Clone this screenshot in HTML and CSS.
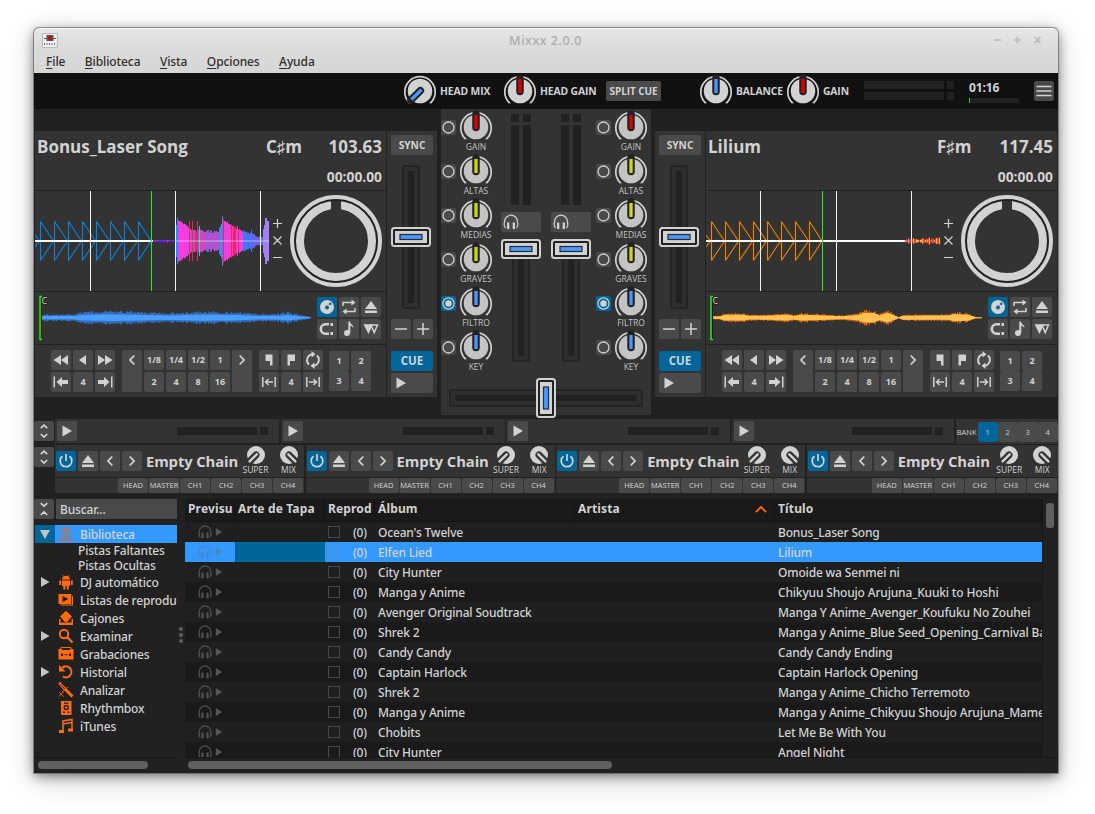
FILE: index.html
```html
<!DOCTYPE html>
<html lang="es">
<head>
<meta charset="utf-8">
<title>Mixxx 2.0.0</title>
<link rel="stylesheet" href="styles.css">
</head>
<body>
<svg class="defs" aria-hidden="true">
  <symbol id="eject" viewBox="0 0 20 20"><path d="M10 4l6 8H4zM4 13.500h12V16H4z"/></symbol>
  <symbol id="vinyl" viewBox="0 0 20 20"><circle cx="10" cy="10" r="7"/><circle cx="10" cy="10.500" r="1.900" fill="#069"/><path d="M11.500 8.500l1.300-1.300" stroke="#069" stroke-width=".8"/><circle cx="13.300" cy="6.700" r="1.200" fill="#069"/></symbol>
  <symbol id="repeat" viewBox="0 0 20 20"><path d="M4 9V5.500h10M16 11v3.500H6" fill="none" stroke="currentColor" stroke-width="1.500"/><path d="M12.500 2.500l4 3-4 3zM7.500 11.500l-4 3 4 3z"/></symbol>
  <symbol id="magnet" viewBox="0 0 20 20"><path d="M12 5.300H8.500a4.700 4.700 0 0 0 0 9.400H12" fill="none" stroke="currentColor" stroke-width="2.600"/><path d="M13.500 4H16v3h-2.500zM13.500 13H16v3h-2.500z"/></symbol>
  <symbol id="note" viewBox="0 0 20 20"><circle cx="8" cy="14" r="3"/><path d="M9.300 14V2.500h1.700c.2 3 4 3 3.300 7-.6-2-1.600-2.500-3-2.700V14z"/></symbol>
  <symbol id="slip" viewBox="0 0 20 20"><path d="M10 6h6.500l-3.300 7.500z" fill="none" stroke="currentColor" stroke-width="1.500"/><path d="M2.500 5.200H12L7.500 15z"/></symbol>
  <symbol id="rew" viewBox="0 0 20 20"><path d="M2.500 10L10 5v10zM10 10l7-5v10z"/></symbol>
  <symbol id="back" viewBox="0 0 20 20"><path d="M6 10l7-5v10z"/></symbol>
  <symbol id="ffw" viewBox="0 0 20 20"><path d="M17.500 10L10 5v10zM10 10L3 5v10z"/></symbol>
  <symbol id="jumpb" viewBox="0 0 20 20"><path d="M2.500 4.500h1.500v11H2.500zM5.500 10L11 5v3h6v4h-6v3z"/></symbol>
  <symbol id="jumpf" viewBox="0 0 20 20"><path d="M17.500 4.500H16v11h1.500zM14.500 10L9 5v3H3v4h6v3z"/></symbol>
  <symbol id="left" viewBox="0 0 20 20"><path d="M12.300 5.500L8 10l4.300 4.500" fill="none" stroke="currentColor" stroke-width="1.800"/></symbol>
  <symbol id="right" viewBox="0 0 20 20"><path d="M7.700 5.500L12 10l-4.300 4.500" fill="none" stroke="currentColor" stroke-width="1.800"/></symbol>
  <symbol id="loopin" viewBox="0 0 20 20"><path d="M6.500 4.500h7v11h-2.500v-4.500h-4.500z"/></symbol>
  <symbol id="loopout" viewBox="0 0 20 20"><path d="M6.500 4.500h7.500v6.500H9v4.500H6.500z"/></symbol>
  <symbol id="reloop" viewBox="0 0 20 20"><path d="M6 14.500A6 6 0 0 1 9.500 4.200M14 5.500a6 6 0 0 1-3.500 10.300" fill="none" stroke="currentColor" stroke-width="1.900"/><path d="M8.500 1l4 3.300-4 3.200zM11.500 12.500l-4 3.300 4 3.200z"/></symbol>
  <symbol id="halve" viewBox="0 0 20 20"><path d="M3.800 5v10M16.200 5v10M6.500 10h7.500M9.500 7l-3 3 3 3" fill="none" stroke="currentColor" stroke-width="1.500"/></symbol>
  <symbol id="double" viewBox="0 0 20 20"><path d="M3.800 5v10M16.200 5v10M6 10h7.500M10.500 7l3 3-3 3" fill="none" stroke="currentColor" stroke-width="1.500"/></symbol>
  <symbol id="minus" viewBox="0 0 20 20"><path d="M4 10h12" stroke="currentColor" stroke-width="1.500"/></symbol>
  <symbol id="plus" viewBox="0 0 20 20"><path d="M4 10h12M10 4v12" stroke="currentColor" stroke-width="1.500"/></symbol>
  <symbol id="play" viewBox="0 0 20 20"><path d="M5.500 4.500l9.500 5.500-9.500 5.500z"/></symbol>
  <symbol id="power" viewBox="0 0 20 20"><path d="M6.500 5.300a5.800 5.800 0 1 0 7 0M10 3v7" fill="none" stroke="currentColor" stroke-width="1.700"/></symbol>
  <symbol id="expand" viewBox="0 0 20 20"><path d="M6.800 7.200L10 4.200l3.200 3M6.800 13l3.200 3 3.200-3" fill="none" stroke="currentColor" stroke-width="1.700"/></symbol>
  <symbol id="collapse" viewBox="0 0 20 20"><path d="M6.800 4.200L10 7.200l3.200-3M6.800 16l3.200-3 3.200 3" fill="none" stroke="currentColor" stroke-width="1.700"/></symbol>
  <symbol id="menu" viewBox="0 0 20 20"><path d="M3 5.500h14M3 10h14M3 14.500h14" stroke="currentColor" stroke-width="1.400" stroke-linecap="round"/></symbol>
  <symbol id="phones" viewBox="0 0 20 20"><path d="M4.500 16A6.500 6.500 0 0 1 3.700 9.500a6.300 6.300 0 0 1 12.600 0A6.500 6.500 0 0 1 15.500 16" fill="none" stroke="currentColor" stroke-width="1.200"/><path d="M6 10.500h2.300v6.500H6zM11.700 10.500H14v6.500h-2.300z"/></symbol>
  <symbol id="ring" viewBox="0 0 15 15"><circle cx="7.500" cy="7.500" r="5.500" fill="none" stroke="currentColor" stroke-width="1.300"/></symbol>
  <symbol id="ringon" viewBox="0 0 15 15"><circle cx="7.500" cy="7.500" r="5.600" fill="none" stroke="currentColor" stroke-width="1.200"/><circle cx="7.500" cy="7.500" r="3.200"/></symbol>
  <symbol id="library" viewBox="0 0 16 16"><path d="M8 1l6.500 3.500h-13zM3 6h1.500v6.500H3zM6 6h1.300v6.500H6zM8.700 6H10v6.500H8.700zM11.500 6H13v6.500h-1.500zM1 13.500h14V15H1z"/></symbol>
  <symbol id="robot" viewBox="0 0 16 16"><path d="M4 5.500a4 3.800 0 0 1 8 0zM4 6.500h8V12H4zM1.200 6.500h2V11h-2zM12.800 6.500h2V11h-2zM5.300 12h2v3.500h-2zM8.700 12h2v3.500h-2z"/><path d="M4.500.8l1.800 2M11.500.8l-1.800 2" stroke="currentColor" stroke-width=".7"/></symbol>
  <symbol id="lists" viewBox="0 0 16 16"><path d="M.5 2h12.800v10H.5zM14 4h1v9.500H2.500v-1H14z"/><path d="M4.500 4l6 3-6 3z" fill="#212121"/></symbol>
  <symbol id="crates" viewBox="0 0 16 16"><path d="M8 .8l6 5.700-5 5.500H7L2 6.500zM1 9h1.500v3.500h11V9H15v6H1z"/></symbol>
  <symbol id="search" viewBox="0 0 16 16"><circle cx="6" cy="6" r="4.200" fill="none" stroke="currentColor" stroke-width="2"/><path d="M9 9l5.500 5.500" stroke="currentColor" stroke-width="2.300"/></symbol>
  <symbol id="tape" viewBox="0 0 16 16"><path d="M.5 3h15v10.500H.5z"/><path d="M3 3V1.500h10V3" fill="none" stroke="currentColor"/><path d="M4 2.500h8V4H4zM3 7.500h2V10H3zM11 7.500h2V10h-2zM6.500 8.200h3v1h-3z" fill="#212121"/></symbol>
  <symbol id="history" viewBox="0 0 16 16"><path d="M4 4A5.500 5.500 0 1 1 5 12.500" fill="none" stroke="currentColor" stroke-width="2.100"/><path d="M1 1v6.500h6.500z"/></symbol>
  <symbol id="wand" viewBox="0 0 16 16"><path d="M1 1l2 1M3 3l11.500 11.500" stroke="currentColor" stroke-width="3"/><path d="M3.500 3.500l3.300 3.300" stroke="#212121"/><path d="M1 10l4.500 4.500M5.500 10L1 14.500M4 10l6-5" stroke="currentColor" stroke-width=".9"/></symbol>
  <symbol id="player" viewBox="0 0 16 16"><path d="M3 1h10.500v14H3z"/><path d="M6 2.500h4.500v1.300H6zM5 11.500h2V13H5zM9.500 11.500h2V13h-2z" fill="#212121"/><circle cx="8.300" cy="7.500" r="2.700" fill="#212121"/><circle cx="8.300" cy="7.500" r="1.300"/></symbol>
  <symbol id="tunes" viewBox="0 0 16 16"><path d="M5 13V3l9-1.500v10M5 6l9-1.500" fill="none" stroke="currentColor" stroke-width="1.500"/><path d="M1 12h5v3H1zM10 10.500h5v3h-5z"/></symbol>
</svg>
<div class="window">
  <header class="titlebar">
    <svg class="appicon" viewBox="0 0 16 16"><path d="M.5.5h15v14H.5z" fill="#eee" stroke="#bbb"/><path d="M2 5.500h12" stroke="#555"/><path d="M4.500 2h7v6h-7z" fill="#555"/><path d="M6.500 3h3v4h-3z" fill="#b11"/><path d="M2 11h12" stroke="#777" stroke-width="2" stroke-dasharray="1 1.500"/></svg>
    <span class="wtitle">Mixxx 2.0.0</span>
    <svg class="wbtns" viewBox="0 0 56 12"><path d="M2 6h7M22 6h7M25.500 2.500v7M42.500 3l6 6M48.500 3l-6 6" stroke="currentColor" stroke-width="1.600"/></svg>
  </header>
  <nav class="menubar"><span><u>F</u>ile</span><span><u>B</u>iblioteca</span><span><u>V</u>ista</span><span><u>O</u>pciones</span><span><u>A</u>yuda</span></nav>
  <div class="topbar" id="topbar"></div>
  <div class="stage" id="stage"></div>
  <div class="samplers" id="samplers"></div>
  <div class="effects" id="effects"></div>
  <div class="library">
    <aside class="side">
      <div class="searchrow"><span class="btn"><svg class="ic"><use href="#collapse"/></svg></span><span class="search">Buscar...</span></div>
      <div class="tree" id="tree"></div>
      <div class="hscroll"><span class="thumb side-thumb"></span></div>
    </aside>
    <div class="split"><i></i><i></i><i></i></div>
    <div class="tablebox">
      <div class="tablemain">
        <div class="table" id="table"></div>
        <div class="vscroll"><span></span></div>
      </div>
      <div class="hscroll"><span class="thumb table-thumb"></span></div>
    </div>
  </div>
</div>
<script src="app.js"></script>
</body>
</html>
```
FILE: styles.css
```css
* { box-sizing: border-box; }
body { margin: 0; width: 1095px; height: 814px; overflow: hidden; background: #fff; padding: 28px 0 0 34px; font-family: "Open Sans", "Noto Sans", sans-serif; color: #d2d2d2; }
.defs { position: absolute; width: 0; height: 0; }
svg { display: block; fill: currentColor; }
i { font-style: normal; }
.window { width: 1024px; height: 745px; background: #212121; border-radius: 5px 5px 0 0; box-shadow: 0 0 0 1px rgba(90,90,90,.6), 0 3px 11px rgba(0,0,0,.45), 0 6px 28px rgba(0,0,0,.24); display: flex; flex-direction: column; white-space: nowrap; }
.titlebar { height: 23px; flex: none; border-radius: 5px 5px 0 0; background: linear-gradient(#e6e6e6, #dadada); border-top: 1px solid #f6f6f6; display: flex; align-items: center; padding: 0 10px 0 8px; }
.appicon { width: 16px; height: 16px; margin-top: 1px; }
.wtitle { flex: 1; text-align: center; font: 500 12.500px/20px "Noto Sans", sans-serif; letter-spacing: .55px; color: #acacac; padding-left: 41px; padding-top: 1px; }
.wbtns { width: 56px; height: 12px; color: #b9b9b9; }
.menubar { height: 22px; flex: none; background: linear-gradient(#dadada, #d6d6d6); padding-left: 12px; display: flex; gap: 19.500px; font: 500 12px/22px "Noto Sans", sans-serif; color: #2f2f2f; letter-spacing: -.1px; }
.menubar u { text-underline-offset: 2px; }

.btn { width: 20px; height: 20px; flex: none; background: #4a4a4a; border-radius: 2px; display: flex; align-items: center; justify-content: center; font: 700 9px/20px "Open Sans", sans-serif; color: #d2d2d2; }
.btn.on { background: #069; }
.btn.tall { height: 42px; align-items: flex-start; }
.ic { width: 20px; height: 20px; }

.topbar { height: 36px; flex: none; background: #111; display: flex; align-items: center; padding-left: 369px; font: 700 10.300px/36px "Open Sans", sans-serif; letter-spacing: -.1px; }
.topbar .knob { margin-right: 3px; }
.l-mix { width: 63px; } .l-gain { width: 66px; } .l-bal { width: 50px; } .l-main { width: 41px; }
.btn.splitcue { width: 55px; font-size: 10px; margin-right: 38px; }
.knob { width: 34px; height: 34px; flex: none; }
.meters { display: grid; grid-template-columns: 80px 7px; gap: 3px; width: 105px; padding-bottom: 1px; }
.meters i { height: 8px; background: #212121; }
.clock { width: 65px; display: flex; flex-direction: column; font: 700 12px/14px "Open Sans", sans-serif; gap: 3px; padding-top: 1px; }
.clock i { width: 50px; height: 5px; background: #212121; border-left: 1px solid #0d2; }

.stage { height: 310px; flex: none; display: flex; align-items: flex-start; }
.bank { display: flex; gap: 1px; padding: 22px 4px 0 1px; width: 407px; flex: none; }
.bank.rightside { padding: 22px 1px 0 4px; }
.deck { width: 351px; height: 266px; display: flex; flex-direction: column; gap: 1px; }
.deck > div, .rate { background: #333; }
.info { height: 59px; padding: 3px 4px 0 2px; display: grid; grid-template-columns: 1fr 61px 55px; font: 700 17px/25px "Open Sans", sans-serif; }
.info .bpm { text-align: right; }
.info .pos { grid-column: 1 / 4; text-align: right; font-size: 13.800px; line-height: 36px; }
.wave { height: 100px; display: flex; }
.wave svg { width: 351px; height: 100px; }
.over { height: 52px; display: flex; justify-content: space-between; padding-right: 5px; }
.over > svg { width: 280px; height: 52px; }
.overbtns { display: grid; grid-template-columns: 20px 20px 20px; grid-auto-rows: 20px; gap: 2px; padding-top: 5px; }
.ctl { height: 52px; display: flex; padding: 5px 0 0 16px; }
.g { display: grid; grid-auto-flow: column; grid-template-rows: 20px 20px; gap: 2px; margin-right: 7px; align-content: start; }
.g .tall { grid-row: 1 / 3; }
.g.hot { margin-left: -1px; row-gap: 0; padding-top: 1px; }
.rate { width: 50px; height: 266px; padding: 4px; display: grid; grid-template-columns: 20px 20px; column-gap: 2px; grid-template-rows: 20px 164px 20px 12px 20px 2px 20px; }
.rate .wide { grid-column: 1 / 3; width: 42px; font-size: 10.200px; }
.rate .cue { grid-row: 5; font-size: 11.500px; font-weight: 700; }
.rate .playb { grid-row: 7; justify-content: flex-start; }
.rate svg.slide { width: 42px; height: 164px; grid-column: 1 / 3; }

.mixer { width: 210px; height: 306px; background: #333; flex: none; padding-bottom: 8px; }
.strips { display: grid; grid-template-columns: 60px 95px 55px; height: 268px; }
.kcol { width: 55px; }
.krow { height: 44px; display: grid; grid-template-columns: 15px 40px; }
.krow .btn { width: 15px; height: 15px; margin-top: 11px; }
.krow .btn svg { width: 15px; height: 15px; }
.kcell { display: flex; flex-direction: column; align-items: center; font: 8.500px/10px "Open Sans", sans-serif; color: #c4c4c4; }
.kcell .knob { margin: 1px 0 -2px; }
.faders { width: 90px; display: grid; grid-template-columns: 40px 40px; column-gap: 10px; padding-top: 5px; }
.vu { display: grid; grid-template: 8px 80px / 8px 8px; gap: 3px 4px; padding-left: 10px; height: 98px; }
.vu i { background: #212121; }
.pfl { width: 40px; justify-content: flex-start; }
.faders svg.slide { width: 40px; height: 130px; margin-top: 5px; }
.mixer > svg { width: 210px; height: 42px; }

.samplers { height: 25px; flex: none; display: flex; padding-right: 0; }
.samplers > .btn { margin: 2px 1px 0 0; }
.sampler { width: 224px; margin-right: 1.700px; height: 24px; background: #333; display: flex; align-items: center; padding: 0 11px 0 2px; }
.sampler i { height: 8px; width: 80px; background: #212121; margin: 0 3px 0 auto; }
.sampler i + i { width: 8px; margin: 0; }
.sampler:nth-of-type(4) { width: 222px; }
.bankbox { flex: 1; height: 25px; background: #333; display: flex; align-items: center; font: 7.500px/20px "Open Sans", sans-serif; padding-left: 1px; }
.bankbox span:first-child { width: 21px; }
.bankbox .btn { font-size: 7.500px; font-weight: 400; }

.effects { height: 54px; flex: none; display: flex; padding-top: 1px; }
.effects > .btn { margin: 2px 1px 0 0; }
.unit { width: 249px; margin-right: 1.600px; }
.unit:last-child { width: 251px; margin: 0; }
.fx { height: 32px; background: #333; display: flex; padding: 0 0 0 1px; gap: 2px; }
.fx > .btn { margin-top: 6px; }
.fx b { width: 91px; margin: 0 0 0 2px; font: 700 14.800px/32px "Open Sans", sans-serif; letter-spacing: -.1px; }
.unit:last-child .fx b { width: 93px; }
.mini { width: 33px; display: flex; flex-direction: column; align-items: center; font: 8.500px/10px "Open Sans", sans-serif; }
.mini svg { width: 20px; height: 20px; }
.fx .mini + .mini { width: 25px; margin-left: 2px; }
.chs { margin-top: 1px; height: 15px; background: #333; display: flex; justify-content: flex-end; gap: 1px; padding-right: 1px; }
.chs span { width: 30px; height: 15px; background: #4a4a4a; border-radius: 2px; text-align: center; font: 7.500px/15px "Open Sans", sans-serif; }

.library { flex: 1; display: flex; font: 500 12px/20px "Noto Sans", sans-serif; min-height: 0; padding-top: 1px; }
.side { width: 144px; display: flex; flex-direction: column; }
.searchrow { display: flex; gap: 2px; height: 22px; padding-top: 0; }
.search { width: 121px; height: 20px; background: #4a4a4a; padding-left: 4px; line-height: 22px; letter-spacing: -.15px; }
.searchrow .btn { border-radius: 2px; }
.tree { flex: 1; overflow: hidden; padding: 4px 1px 0; letter-spacing: -.18px; }
.node { height: 18px; display: grid; grid-template-columns: 20px 25px 1fr; }
.node.sub { height: 15px; line-height: 16px; grid-template-columns: 20px 23px 1fr; }
.node svg { width: 16px; height: 16px; margin: 1px 0 0 3px; color: #ff6a0a; }
.node .arr { width: 10px; height: 10px; margin: 4px 0 0 5px; color: #c4c4c4; }
.node.sel { background: #39f; }
.node.sel .arrbox { background: #069; height: 18px; }
.node.sel svg:not(.arr) { color: #b9744f; }
.hscroll { height: 16px; flex: none; border-top: 1px solid #171717; padding: 3px 3px 0; background: #212121; }
.thumb { display: block; height: 8px; border-radius: 4px; background: #606060; }
.side-thumb { width: 110px; margin-left: 1px; }
.table-thumb { width: 424px; }
.split { width: 7px; display: flex; flex-direction: column; gap: 2px; padding-top: 128px; }
.split i { width: 4px; height: 4px; margin-left: 1px; border-radius: 50%; background: #606060; }
.tablebox { flex: 1; display: flex; flex-direction: column; min-width: 0; }
.tablemain { flex: 1; display: flex; min-height: 0; }
.table { width: 857px; height: 259px; overflow: hidden; }
.tr { display: grid; grid-template-columns: 50px 90px 50px 200px 200px 267px; height: 20px; line-height: 22px; background: #1f1f1f; letter-spacing: -.17px; }
.tr > span { overflow: hidden; padding-left: 3px; height: 20px; }
.tr:nth-child(odd) { background: #1a1a1a; }
.tr.head { height: 23px; line-height: 20px; font-weight: 700; letter-spacing: .15px; background: #1a1a1a; border-bottom: 1px solid #141414; }
.tr.head > span { border-right: 1px solid #141414; display: flex; justify-content: space-between; height: 22px; }
.tr.head svg { width: 12px; height: 10px; margin: 5px 7px 0 0; }
.tr.sel { background: #39f; }
.tr.sel > :nth-child(2) { background: #069; }
.tr .pv { display: flex; padding: 1px 0 0 11px; color: #555; }
.tr .pv svg { width: 18px; height: 18px; }
.tr .pv .tri { width: 8px; height: 8px; margin: 5px 0 0 1px; }
.tr.sel .pv { color: #4a86bf; }
.tr .pl { display: flex; gap: 13px; }
.tr .pl i { width: 12px; height: 12px; border: 1px solid #484848; margin-top: 4px; }
.tr.sel .pl i { border-color: #5a92cc; }
.vscroll { width: 16px; background: #212121; border-left: 1px solid #171717; padding: 4px 0 0 3px; }
.vscroll span { display: block; width: 8px; height: 25px; border-radius: 3px; background: #606060; }
```
FILE: app.js
```js
const ic = (n, c = 'ic') => `<svg class="${c}"><use href="#${n}"/></svg>`;
const btn = (inner, c = '') => `<span class="btn ${c}">${inner}</span>`;
const ib = (n, c) => btn(ic(n), c);

const knob = (color, rot = 0) => `<svg class="knob" viewBox="-17 -17 34 34">
  <path d="M-12 11.200H-11A15.200 15.200 0 1 1 11 11.200H12" transform="translate(0,.2)" fill="none" stroke="#d2d2d2" stroke-width="1.700"/>
  <circle r="12.300"/><g transform="rotate(${rot})"><path d="M0-13V.5" stroke="#222" stroke-width="7.500" stroke-linecap="round"/><path d="M0-12V2" stroke="${color}" stroke-width="3.300"/></g></svg>`;
const mini = (label, rot) => `<span class="mini"><svg viewBox="-10 -10 20 20"><circle r="9"/><g transform="rotate(${rot})"><path d="M0-11V0" stroke="#333" stroke-width="7" stroke-linecap="round"/><path d="M0-9V1" stroke="#d2d2d2" stroke-width="2.400" stroke-linecap="round"/></g></svg>${label}</span>`;

const groove = (x, y, w, h) => `<rect x="${x + 1}" y="${y + 1}" width="${w - 2}" height="${h - 2}" rx="1.500" fill="#2e2e2e" stroke="#242424" stroke-width="2"/><rect x="${x + 6}" y="${y + 6}" width="${w - 12}" height="${h - 12}" fill="#212121"/>`;
const handle = (x, y, w, h) => {
  const v = h > w, a = v ? 7.5 : 9, b = v ? 9 : 7.5;
  return `<rect x="${x + 1}" y="${y + 1}" width="${w - 2}" height="${h - 2}" rx="2.500" fill="#222" stroke="#d2d2d2" stroke-width="2"/><rect x="${x + 4}" y="${y + 4}" width="${w - 8}" height="${h - 8}" fill="#d2d2d2"/><rect x="${x + a}" y="${y + b}" width="${w - 2 * a}" height="${h - 2 * b}" fill="#4898ff" stroke="#2a2a2a" stroke-width="1.200"/>`;
};

const rand = seed => () => (seed = (seed * 16807) % 2147483647) / 2147483647;

function saw(off, color) {
  let d = `M0 44L${off - 1} 50M0 56L${off - 1} 50`;
  for (let k = 0; k < 8; k++) {
    const x = off + k * 14;
    const end = Math.min(x + 13, 116);
    d += `M${x - 2} 50H${x}V30.500L${end} 50M${x} 50V69.500L${end} 50`;
  }
  return `<path d="${d}" fill="none" stroke="${color}" stroke-width="1.100" stroke-linejoin="bevel"/>`;
}

function bars(right) {
  const r = rand(right ? 77 : 31);
  let s = '';
  if (right) {
    for (let x = 199; x < 234; x++) {
      const h = 1 + r() * 2.500;
      s += `<rect x="${x}" y="${50 - h}" width="1" height="${2 * h}" fill="${['#f43', '#f84', '#fb4', '#e35'][Math.floor(r() * 4)]}"/>`;
    }
    return s;
  }
  for (let x = 118; x < 140; x++) s += `<rect x="${x}" y="49" width="1" height="${1 + r() * 1.500}" fill="${r() > .5 ? '#b3f' : '#62e'}"/>`;
  for (let x = 140; x < 234; x++) {
    let h, c;
    if (x < 143) { h = x === 142 ? 23 : 16; c = '#3d83f2'; }
    else if (x < 184) {
      h = Math.max(8 + r() * 3.500, 20 - (x - 143) * .72 + r() * 2);
      c = x < 154 ? '#f03fe0' : r() > .45 ? '#f03ab0' : '#7468ee';
      if (x === 154 || x === 157 || x === 162) { h = 20; c = '#e8285c'; }
      if (x === 160 || x === 161) c = '#e8285c';
      if (x === 164) { h = 15; c = '#2bc8e8'; }
    }
    else if (x < 188) { h = x === 187 ? 25 : 13 + (x - 184) * 2; c = '#4a83f2'; }
    else if (x < 208) { h = 20 - (x - 188) * .6 + r() * 2; c = r() > .3 ? '#f03fd8' : '#e8285c'; if (x === 202) h = 15; }
    else if (x < 228) { h = Math.max(4, 10 - (x - 208) * .42 + r() * 2.500 - 1); c = r() > .4 ? '#3f76f2' : '#7a5cea'; if (x === 216) h = 11; }
    else { h = x < 229 ? 12 : x < 230 ? 16 : x < 232 ? 23 : 20; c = r() > .5 ? '#9a82f2' : '#c07cf0'; }
    s += `<rect x="${x}" y="${50 - h}" width="1" height="${2 * h}" fill="${c}"/>`;
  }
  return s + '<path d="M140 50H234" stroke="#fff" stroke-width="1.500" opacity=".35"/>';
}

function wave(right) {
  const lines = right ? [54.500, 130.500, 205.500] : [55.500, 140.500, 225.500];
  return `<svg viewBox="0 0 351 100">${saw(5.500, right ? '#f08400' : '#0a84dc')}
  <path d="M0 50H${right ? 234 : 118}" stroke="#fff" stroke-width="2"/>
  ${bars(right)}
  <path d="${lines.map(x => `M${x} 0V100`).join('')}" stroke="#f4f4f4"/>
  <path d="M116.500 0V100" stroke="#0f1"/>
  <path d="M238 32.500h9M242.500 28v9M238.500 45.500l8 8M246.500 45.500l-8 8M238 66.500h9" stroke="#d2d2d2" stroke-width="1.200" fill="none"/>
  <circle cx="301" cy="50" r="44" fill="none" stroke="#d2d2d2" stroke-width="4"/>
  <circle cx="301" cy="50" r="41" fill="none" stroke="#212121" stroke-width="1.300"/>
  <circle cx="301" cy="50" r="36" fill="none" stroke="#d2d2d2" stroke-width="8"/>
  <path d="M296 9.500h10v9.500h-10z" fill="#333"/><path d="M296 9.500h10" stroke="#212121"/></svg>`;
}

function overview(right) {
  const r = rand(right ? 5 : 9);
  const points = right
    ? [[0, 1.5], [7, 2], [12, 4], [30, 4], [36, 2.500], [55, 2.800], [74, 4], [80, 2.500], [88, 4], [100, 3.500], [130, 2], [144, 3.500], [150, 6.500], [160, 6.500], [166, 3.500], [174, 6.500], [182, 2.500], [185, .6], [190, 2.800], [235, 3], [241, 5], [255, 4], [262, .8], [269, .6]]
    : [[0, 3], [32, 3], [40, 5], [70, 6], [100, 5], [125, 4], [160, 5.500], [195, 4.800], [215, 3.200], [238, 3.600], [245, 5], [269, .5]];
  const amp = x => {
    const i = points.findIndex(p => p[0] > x);
    if (i < 1) return points[points.length - 1][1];
    const [a, b] = [points[i - 1], points[i]];
    return a[1] + (b[1] - a[1]) * (x - a[0]) / (b[0] - a[0]);
  };
  let outer = '', inner = '';
  for (let x = 0; x < 269; x++) {
    const a = amp(x), h = a * (.75 + r() * .5), q = a * (right ? .72 : .55);
    outer += `M${x + 7.500} ${25.700 - h}V${25.700 + h}`;
    inner += `M${x + 7.500} ${25.700 - q}V${25.700 + q}`;
  }
  return `<svg viewBox="0 0 280 52"><path d="${outer}" stroke="${right ? '#d9660c' : '#2f6fbd'}"/><path d="${inner}" stroke="${right ? '#ffc252' : '#4a9dff'}" stroke-width="1.100"/>
  <path d="M6.500 4V47" stroke="${right ? '#111' : '#700'}"/><path d="M7 4.500H5V47.500H7" fill="none" stroke="#0f0" stroke-width="1.500"/>
  <text x="6.500" y="11.500" font-size="9" fill="#ddd" stroke="#111" stroke-width="1" paint-order="stroke">C</text></svg>`;
}

const deck = (name, key, bpm, right) => `<div class="deck">
  <div class="info"><span>${name}</span><span>${key}</span><span class="bpm">${bpm}</span><span class="pos">00:00.00</span></div>
  <div class="wave">${wave(right)}</div>
  <div class="over">${overview(right)}<div class="overbtns">${ib('vinyl', 'on')}${['repeat', 'eject', 'magnet', 'note', 'slip'].map(n => ib(n)).join('')}</div></div>
  <div class="ctl">
    <div class="g">${ib('rew')}${ib('jumpb')}${ib('back')}${btn(4)}${ib('ffw')}${ib('jumpf')}</div>
    <div class="g">${ib('left', 'tall')}${['1/8', 2, '1/4', 4, '1/2', 8, 1, 16].map(t => btn(t)).join('')}${ib('right', 'tall')}</div>
    <div class="g">${ib('loopin')}${ib('halve')}${ib('loopout')}${btn(4)}${ib('reloop')}${ib('double')}</div>
    <div class="g hot">${[1, 3, 2, 4].map(t => btn(t)).join('')}</div>
  </div></div>`;

const rate = `<div class="rate">${btn('SYNC', 'wide')}<svg class="slide">${groove(11, 10, 18, 144)}${handle(0, 72, 40, 20)}</svg>${ib('minus')}${ib('plus')}${btn('CUE', 'wide on cue')}${ib('play', 'wide playb')}</div>`;

const kcol = `<div class="kcol">${[['GAIN', '#e00000'], ['ALTAS', '#cfdc00'], ['MEDIAS', '#cfdc00'], ['GRAVES', '#cfdc00'], ['FILTRO', '#4898ff'], ['KEY', '#4898ff']]
  .map(([t, c]) => `<div class="krow">${t === 'FILTRO' ? ib('ringon', 'on') : ib('ring')}<span class="kcell">${knob(c)}${t}</span></div>`).join('')}</div>`;
const fader = `<div><div class="vu"><i></i><i></i><i></i><i></i></div>${btn(ic('phones'), 'pfl')}<svg class="slide">${groove(11, 4, 18, 121)}${handle(0, 2, 40, 20)}</svg></div>`;

document.getElementById('topbar').innerHTML =
  `${knob('#4898ff', -135)}<span class="l-mix">HEAD MIX</span>${knob('#e00000')}<span class="l-gain">HEAD GAIN</span>${btn('SPLIT CUE', 'splitcue')}
  ${knob('#4898ff')}<span class="l-bal">BALANCE</span>${knob('#e00000')}<span class="l-main">GAIN</span>
  <span class="meters"><i></i><i></i><i></i><i></i></span><span class="clock">01:16<i></i></span>${ib('menu')}`;

document.getElementById('stage').innerHTML =
  `<div class="bank">${deck('Bonus_Laser Song', 'C♯m', '103.63', false)}${rate}</div>
  <div class="mixer"><div class="strips">${kcol}<div class="faders">${fader}${fader}</div>${kcol}</div><svg>${groove(8, 12, 194, 18)}${handle(95, 1, 20, 40)}</svg></div>
  <div class="bank rightside">${rate}${deck('Lilium', 'F♯m', '117.45', true)}</div>`;

document.getElementById('samplers').innerHTML = ib('expand') +
  `<div class="sampler">${ib('play')}<i></i><i></i></div>`.repeat(4) +
  `<div class="bankbox"><span>BANK</span>${btn(1, 'on')}${btn(2)}${btn(3)}${btn(4)}</div>`;

document.getElementById('effects').innerHTML = ib('expand') +
  `<div class="unit"><div class="fx">${ib('power', 'on')}${ib('eject')}${ib('left')}${ib('right')}<b>Empty Chain</b>${mini('SUPER', -135)}${mini('MIX', 135)}</div>
  <div class="chs">${['HEAD', 'MASTER', 'CH1', 'CH2', 'CH3', 'CH4'].map(t => `<span>${t}</span>`).join('')}</div></div>`.repeat(4);

const arrow = open => `<svg class="arr" viewBox="0 0 10 10"><path d="${open ? 'M0 1h10L5 10z' : 'M1 0l8.500 5L1 10z'}"/></svg>`;
document.getElementById('tree').innerHTML = [
  ['library', 'Biblioteca', 1], [0, 'Pistas Faltantes'], [0, 'Pistas Ocultas'], ['robot', 'DJ automático', 2], ['lists', 'Listas de reprodu'], ['crates', 'Cajones'],
  ['search', 'Examinar', 2], ['tape', 'Grabaciones'], ['history', 'Historial', 2], ['wand', 'Analizar'], ['player', 'Rhythmbox'], ['tunes', 'iTunes']
].map(([i, t, a]) => `<div class="node ${a === 1 ? 'sel' : ''} ${i ? '' : 'sub'}"><span class="arrbox">${a ? arrow(a === 1) : ''}</span><span>${i ? ic(i, '') : ''}</span><span>${t}</span></div>`).join('');

document.getElementById('table').innerHTML =
  `<div class="tr head"><span>Previsu</span><span>Arte de Tapa</span><span>Reprod</span><span>Álbum</span><span>Artista<svg viewBox="0 0 12 10"><path d="M1 8l5-5 5 5" fill="none" stroke="#ff6a0a" stroke-width="1.800"/></svg></span><span>Título</span></div>` + [
    ["Ocean's Twelve", 'Bonus_Laser Song'], ['Elfen Lied', 'Lilium'], ['City Hunter', 'Omoide wa Senmei ni'], ['Manga y Anime', 'Chikyuu Shoujo Arujuna_Kuuki to Hoshi'],
    ['Avenger Original Soudtrack', 'Manga Y Anime_Avenger_Koufuku No Zouhei'], ['Shrek 2', 'Manga y Anime_Blue Seed_Opening_Carnival Ba'], ['Candy Candy', 'Candy Candy Ending'],
    ['Captain Harlock', 'Captain Harlock Opening'], ['Shrek 2', 'Manga y Anime_Chicho Terremoto'], ['Manga y Anime', 'Manga y Anime_Chikyuu Shoujo Arujuna_Mames'],
    ['Chobits', 'Let Me Be With You'], ['City Hunter', 'Angel Night']
  ].map(([a, t], i) => `<div class="tr ${i === 1 ? 'sel' : ''}"><span class="pv">${ic('phones')}<svg class="tri" viewBox="0 0 10 10"><path d="M1 0l8 5-8 5z"/></svg></span><span></span><span class="pl"><i></i>(0)</span><span>${a}</span><span></span><span>${t}</span></div>`).join('');
```
